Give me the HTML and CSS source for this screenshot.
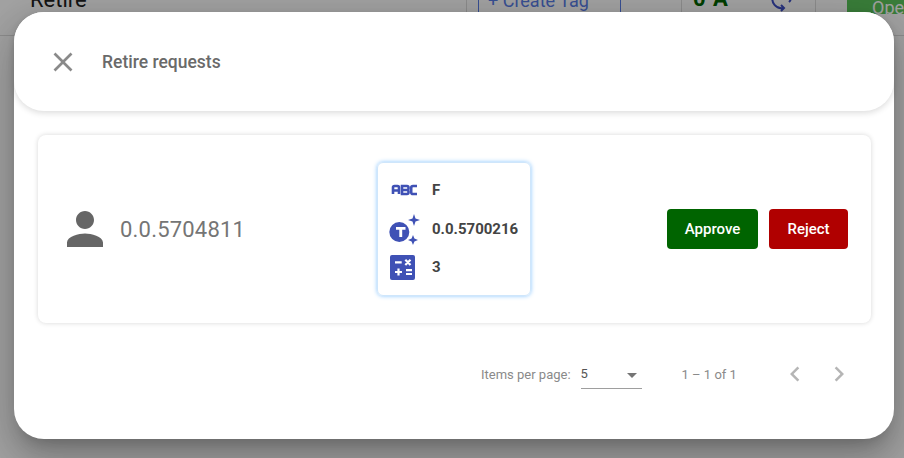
FILE: index.html
```html
<!DOCTYPE html>
<html lang="en">
<head>
<meta charset="utf-8">
<title>Retire requests</title>
<link rel="stylesheet" href="styles.css">
</head>
<body>
<div class="page">
  <div class="topbar">
    <span class="page-title">Retire</span>
    <span class="cell cell-tag"><span class="tag-btn">+ Create Tag</span></span>
    <span class="cell cell-count">
      <b>0 A</b>
      <svg class="sync" viewBox="0 0 24 24" width="24" height="24"><path d="M3 8a9 9 0 0 0 10 12M11 17l3 3-3 3M21 8a7 7 0 0 1-2 6" fill="none" stroke="#3f51c5" stroke-width="2"/></svg>
    </span>
    <span class="cell cell-end"></span>
    <span class="open-btn">Open</span>
  </div>
</div>
<div class="backdrop"></div>
<main class="dialog">
  <header class="dialog-head">
    <svg class="close" viewBox="0 0 24 24" width="24" height="24"><path d="M19 6.410 17.590 5 12 10.590 6.410 5 5 6.410 10.590 12 5 17.590 6.410 19 12 13.410 17.590 19 19 17.590 13.410 12z"/></svg>
    <h1>Retire requests</h1>
  </header>
  <section class="body">
    <article class="card">
      <div class="user">
        <svg viewBox="0 0 24 24" width="54" height="54"><path d="M12 12c2.210 0 4-1.790 4-4s-1.790-4-4-4-4 1.790-4 4 1.790 4 4 4zm0 2c-2.670 0-8 1.340-8 4v2h16v-2c0-2.660-5.330-4-8-4z"/></svg>
        <span>0.0.5704811</span>
      </div>
      <div class="info">
        <div class="info-row">
          <svg class="ico" viewBox="0 0 32 32"><g fill="none" stroke="#3f51b5" stroke-width="2.600"><path d="M6 20v-6.500q0-1.500 1.500-1.500h3q1.500 0 1.500 1.500V20M6 16.500h6"/><path d="M15 12h5q1.500 0 1.500 1.500v1q0 1.500-1.500 1.500h-5zM15 16h5q1.500 0 1.500 1.500v1q0 1.500-1.500 1.500h-5z"/><path d="M30 12h-4q-1.800 0-1.800 1.800v4.400q0 1.800 1.800 1.800h4"/></g></svg>
          <span>F</span>
        </div>
        <div class="info-row">
          <svg class="ico" viewBox="0 0 32 32"><circle cx="12.300" cy="19" r="10" fill="#3f51b5"/><path d="M9 14h9.500v2.800h-3.300V24h-2.900v-7.200H9z" fill="#fff"/><path d="M27 1l1.500 4.500L33 7l-4.500 1.500L27 13l-1.500-4.500L21 7l4.500-1.500zM26 22l1.400 3.600L31 27l-3.600 1.400L26 32l-1.400-3.600L21 27l3.600-1.400z" fill="#3f51b5"/></svg>
          <span>0.0.5700216</span>
        </div>
        <div class="info-row">
          <svg class="ico" viewBox="0 0 32 32"><rect x="3" y="4" width="25" height="25" rx="2" fill="#3f51b5"/><path d="M8 11.300h6.700M18.300 8.800l5.200 5.200M23.500 8.800l-5.200 5.200M8 21h7M11.500 17.500v7M19 19.200h6M19 23h6" stroke="#fff" stroke-width="2.200" fill="none"/></svg>
          <span>3</span>
        </div>
      </div>
      <div class="actions">
        <button class="btn btn-approve">Approve</button>
        <button class="btn btn-reject">Reject</button>
      </div>
    </article>
    <footer class="pager">
      <span class="pager-label">Items per page:</span>
      <div class="select"><span>5</span><i class="caret"></i></div>
      <span class="range">1 – 1 of 1</span>
      <svg class="nav nav-prev" viewBox="0 0 24 24" width="24" height="24"><path d="M15.410 7.410 14 6l-6 6 6 6 1.410-1.410L10.830 12z"/></svg>
      <svg class="nav" viewBox="0 0 24 24" width="24" height="24"><path d="M10 6 8.590 7.410 13.170 12l-4.580 4.590L10 18l6-6z"/></svg>
    </footer>
  </section>
</main>
</body>
</html>
```

FILE: styles.css
```css
* { box-sizing: border-box; }
html, body { margin: 0; height: 100%; overflow: hidden; }
body { font-family: Roboto, "Liberation Sans", sans-serif; background: #fff; position: relative; }

.page { height: 458px; background: #fff; overflow: hidden; }
.topbar { display: flex; align-items: flex-start; height: 36px; border-bottom: 1px solid #ddd; padding-left: 30px; }
.page-title { font-size: 22px; color: #222; line-height: 26px; margin-top: -13px; width: 436px; flex: none; }
.cell { display: flex; height: 35px; align-items: flex-start; border-left: 1px solid #ddd; flex: none; }
.cell-tag { width: 215px; padding-left: 11px; }
.tag-btn { width: 143px; height: 40px; margin-top: -9px; border: 1px solid #5a7de8; color: #5a7de8; font-size: 18px; line-height: 18px; padding-left: 9px; white-space: nowrap; }
.cell-count { width: 134px; padding-left: 11px; }
.cell-count b { width: 77px; flex: none; font-size: 22px; color: #006400; font-weight: 700; letter-spacing: 1px; line-height: 24px; margin-top: -13px; white-space: nowrap; }
.sync { flex: none; margin-top: -12px; }
.cell-end { width: 32px; }
.open-btn { flex: none; width: 57px; height: 14px; background: #5cc65c; color: #fff; font-size: 18px; line-height: 16px; padding-left: 25px; white-space: nowrap; overflow: hidden; }

.backdrop { position: absolute; inset: 0; background: rgba(0, 0, 0, .36); }

.dialog { position: absolute; left: 14px; top: 12px; width: 880px; height: 427px; background: #fff; border-radius: 30px; box-shadow: 0 11px 15px -7px rgba(0,0,0,.2), 0 24px 38px 3px rgba(0,0,0,.14), 0 9px 46px 8px rgba(0,0,0,.12); display: flex; flex-direction: column; }

.dialog-head { height: 99px; flex: none; background: #fff; border-radius: 30px; box-shadow: 0 2px 6px rgba(0,0,0,.14); display: flex; align-items: center; padding-left: 37px; }
.close { fill: #8a8a8a; width: 24px; height: 24px; flex: none; transform: scale(1.35); }
.dialog-head h1 { margin: 2px 0 0 27px; font-size: 17.500px; font-weight: 500; color: #6a6a6a; line-height: 1; }

.body { padding: 24px 23px 0 24px; display: flex; flex-direction: column; }
.card { height: 188px; border-radius: 8px; background: #fff; box-shadow: 0 0 5px rgba(0,0,0,.16); display: flex; align-items: center; }
.user { display: flex; align-items: center; width: 339px; padding-left: 20px; color: #757575; font-size: 22px; flex: none; }
.user svg { fill: #666; flex: none; }
.user span { margin-left: 8px; letter-spacing: .2px; }

.info { width: 154px; height: 134px; flex: none; border-radius: 6px; border: 1px solid #cfe6fb; box-shadow: 0 0 4px rgba(110,185,255,.8); padding: 8px 0 0 9px; display: flex; flex-direction: column; }
.info-row { display: flex; align-items: center; height: 38.500px; font-size: 15px; font-weight: 700; color: #444; }
.ico { width: 32px; height: 32px; flex: none; margin-right: 13px; overflow: visible; }

.actions { display: flex; gap: 11px; margin-left: 136px; }
.btn { height: 40px; border: 0; border-radius: 4px; color: #fff; font: 500 15px Roboto, "Liberation Sans", sans-serif; padding: 0; }
.btn-approve { width: 91px; background: #006400; }
.btn-reject { width: 79px; background: #b00000; }

.pager { display: flex; align-items: center; height: 56px; margin-top: 23px; color: #8a8a8a; font-size: 13px; padding-left: 443px; }
.pager-label { flex: none; }
.select { width: 61px; height: 30px; margin-left: 10px; border-bottom: 1px solid #9e9e9e; color: #555; display: flex; justify-content: space-between; align-items: center; padding-right: 5px; flex: none; }
.caret { width: 0; height: 0; border-left: 5px solid transparent; border-right: 5px solid transparent; border-top: 5px solid #757575; margin-top: 3px; }
.range { margin-left: 40px; width: 101px; flex: none; color: #8a8a8a; }
.nav { fill: #b5b5b5; flex: none; transform: scale(1.25); }
.nav-prev { margin-right: 20px; }
```
